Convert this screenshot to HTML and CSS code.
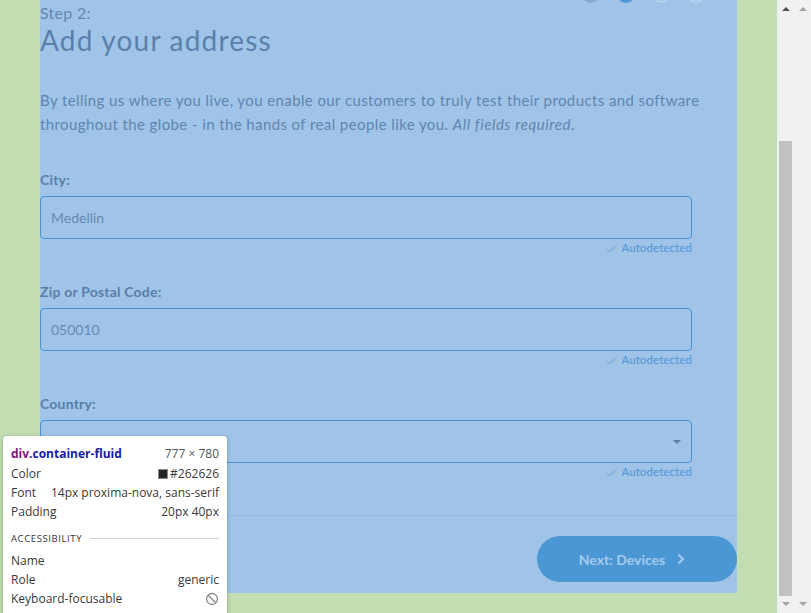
FILE: index.html
```html
<!DOCTYPE html>
<html>
<head>
<meta charset="utf-8">
<link rel="stylesheet" href="styles.css">
</head>
<body>
<div class="window">
  <div class="viewport">
    <div class="container">
      <div class="stepper">
        <span class="dot done"></span>
        <span class="dot current"></span>
        <span class="dot"></span>
        <span class="dot"></span>
      </div>
      <div class="step">Step 2:</div>
      <h1 class="title">Add your address</h1>
      <p class="intro">By telling us where you live, you enable our customers to truly test their products and software throughout the globe - in the hands of real people like you. <em>All fields required.</em></p>

      <div class="field">
        <label class="label">City:</label>
        <div class="input">Medellín</div>
        <div class="auto"><svg class="check" width="10" height="8" viewBox="0 0 10 8"><path d="M1 4.5 L3.5 7 L9 1" fill="none" stroke="currentColor" stroke-width="1"/></svg>Autodetected</div>
      </div>
      <div class="field">
        <label class="label">Zip or Postal Code:</label>
        <div class="input">050010</div>
        <div class="auto"><svg class="check" width="10" height="8" viewBox="0 0 10 8"><path d="M1 4.5 L3.5 7 L9 1" fill="none" stroke="currentColor" stroke-width="1"/></svg>Autodetected</div>
      </div>
      <div class="field">
        <label class="label">Country:</label>
        <div class="input select"><span></span><span class="caret"></span></div>
        <div class="auto"><svg class="check" width="10" height="8" viewBox="0 0 10 8"><path d="M1 4.5 L3.5 7 L9 1" fill="none" stroke="currentColor" stroke-width="1"/></svg>Autodetected</div>
      </div>
      <div class="footer">
        <div class="next">Next: Devices <svg width="8" height="12" viewBox="0 0 8 12"><path d="M1.5 1.5 L6 6 L1.5 10.5" fill="none" stroke="currentColor" stroke-width="2"/></svg></div>
      </div>
    </div>

    <div class="tooltip">
      <div class="row head"><span><span class="tag">div</span><span class="cls">.container-fluid</span></span><span class="dim">777 × 780</span></div>
      <div class="row"><span>Color</span><span class="val"><span class="swatch"></span>#262626</span></div>
      <div class="row"><span>Font</span><span class="val">14px proxima-nova, sans-serif</span></div>
      <div class="row"><span>Padding</span><span class="val">20px 40px</span></div>
      <div class="section"><span>ACCESSIBILITY</span><span class="rule"></span></div>
      <div class="row"><span>Name</span><span></span></div>
      <div class="row"><span>Role</span><span class="val">generic</span></div>
      <div class="row"><span>Keyboard-focusable</span><svg width="14" height="14" viewBox="0 0 14 14"><circle cx="7" cy="7" r="5.5" fill="none" stroke="#8a8a8a" stroke-width="1.3"/><path d="M3.2 3.2 L10.8 10.8" stroke="#8a8a8a" stroke-width="1.3"/></svg></div>
    </div>
  </div>
  <div class="scrollbar">
    <span class="arrow up dark"></span>
    <div class="track"><div class="thumb"></div></div>
    <span class="arrow down"></span>
  </div>
  <div class="scrollbar">
    <span class="arrow up"></span>
    <div class="track"></div>
    <span class="arrow down"></span>
  </div>
</div>
</body>
</html>
```

FILE: styles.css
```css
* { box-sizing: border-box; }
html, body { margin: 0; padding: 0; }
body {
  width: 811px;
  height: 613px;
  overflow: hidden;
  font-family: Lato, "Open Sans", sans-serif;
  background: #f1f1f1;
}
.window {
  display: flex;
  width: 811px;
  height: 613px;
}
.viewport {
  position: relative;
  width: 777px;
  height: 613px;
  background: #c3ddb2;
  padding: 0 40px 20px;
  overflow: hidden;
}
.container {
  background: #9fc4e8;
  height: 593px;
  display: flex;
  flex-direction: column;
}
.stepper {
  display: flex;
  justify-content: flex-end;
  gap: 17px;
  padding-right: 32px;
  margin-top: -15px;
  height: 18px;
}
.dot {
  width: 18px;
  height: 18px;
  border-radius: 50%;
  border: 2px solid #b5d2ee;
}
.dot.done { background: #88a9cb; border-color: #88a9cb; }
.dot.current { background: #4d97d6; border-color: #4d97d6; }
.step {
  margin-top: -2px;
  font-size: 16px;
  line-height: 24px;
  color: #6387b0;
  letter-spacing: 0.3px;
}
.title {
  margin: 0;
  font-weight: 400;
  font-size: 28px;
  line-height: 30px;
  color: #5a80aa;
  letter-spacing: 1.2px;
}
.intro {
  margin: 33px 0 0;
  font-size: 15px;
  line-height: 24px;
  color: #5f84ae;
  width: 690px;
  letter-spacing: 0.4px;
}
.intro em { font-style: italic; letter-spacing: 0.6px; }
.field {
  width: 652px;
  margin-top: 36px;
}
.field + .field { margin-top: 29px; }
.label {
  display: block;
  font-weight: 700;
  font-size: 14px;
  line-height: 16px;
  color: #5a7ea8;
  margin-bottom: 8px;
  letter-spacing: 0.2px;
}
.input {
  height: 43px;
  border: 1px solid #4a93d0;
  border-radius: 4px;
  padding: 0 10px;
  display: flex;
  align-items: center;
  font-size: 14px;
  color: #6688b2;
}
.select { justify-content: space-between; padding-right: 10px; }
.caret {
  width: 0; height: 0;
  border-left: 4px solid transparent;
  border-right: 4px solid transparent;
  border-top: 4px solid #5f7da0;
}
.auto {
  display: flex;
  justify-content: flex-end;
  align-items: center;
  gap: 5px;
  margin-top: 2px;
  font-size: 11.5px;
  line-height: 14px;
  color: #4e95d5;
  letter-spacing: 0.1px;
}
.check { color: #6f9fcb; margin-top: 2px; }
.footer {
  margin-top: 36px;
  border-top: 1px solid #93bae0;
  padding-top: 20px;
  display: flex;
  justify-content: flex-end;
}
.next {
  width: 200px;
  height: 46px;
  border-radius: 23px;
  background: #4a97d4;
  color: #a5caee;
  font-weight: 700;
  font-size: 14px;
  display: flex;
  align-items: center;
  justify-content: center;
  gap: 12px;
  padding-right: 10px;
}
.tooltip {
  position: absolute;
  left: 3px;
  top: 436px;
  width: 224px;
  height: 190px;
  background: #fff;
  border-radius: 4px;
  box-shadow: 0 1px 4px rgba(0,0,0,0.25);
  padding: 6px 8px 0;
  font-family: "Open Sans", "Noto Sans", sans-serif;
  font-size: 12px;
  color: #3a3a3a;
}
.row {
  display: flex;
  justify-content: space-between;
  align-items: center;
  height: 19px;
  white-space: nowrap;
}
.row.head { height: 22px; }
.tag { color: #881280; font-weight: 700; }
.cls { color: #1a1aa6; font-weight: 700; }
.dim { color: #555; }
.val { display: flex; align-items: center; }
.swatch {
  width: 10px; height: 10px;
  background: #262626;
  border: 1px solid #888;
  margin-right: 2px;
}
.section {
  display: flex;
  align-items: center;
  gap: 8px;
  font-size: 9.5px;
  letter-spacing: 0.6px;
  color: #333;
  height: 22px;
  margin: 6px 0 2px;
}
.rule { flex: 1; height: 1px; background: #d0d0d0; }
.scrollbar {
  width: 17px;
  height: 613px;
  background: #f1f1f1;
  display: flex;
  flex-direction: column;
  align-items: center;
}
.track { flex: 1; width: 100%; padding: 0 2px; }
.thumb {
  margin-top: 124px;
  height: 455px;
  background: #c1c1c1;
}
.arrow {
  width: 0; height: 0;
  border-left: 4px solid transparent;
  border-right: 4px solid transparent;
  margin: 7px 0 6px;
}
.arrow.up { border-bottom: 4px solid #a3a3a3; }
.arrow.up.dark { border-bottom-color: #505050; }
.arrow.down { border-top: 4px solid #a3a3a3; margin: 6px 0 7px; }
```
